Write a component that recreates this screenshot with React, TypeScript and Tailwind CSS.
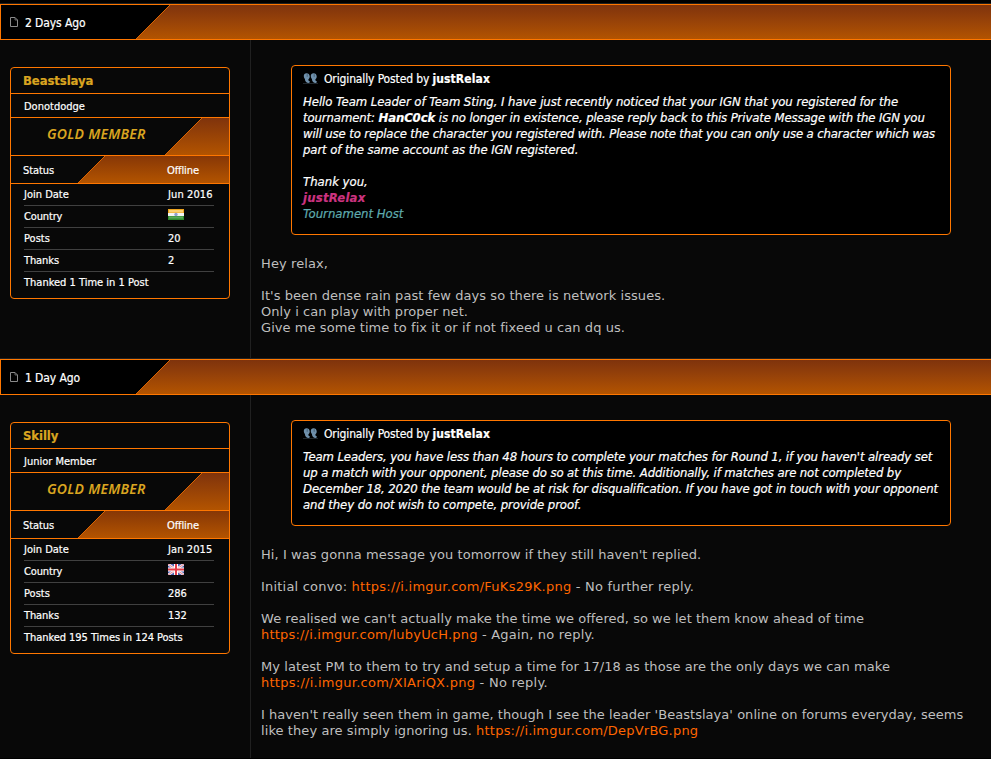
import type { ReactNode } from "react";

const TAHOMA = "font-['DejaVu_Sans_Condensed','DejaVu_Sans',sans-serif] [font-stretch:condensed] [-webkit-text-stroke:0.2px]";
const VERDANA = "font-['DejaVu_Sans',sans-serif]";

function PageIcon() {
  return (
    <svg width="8" height="10" viewBox="0 0 8 10" fill="none" stroke="#8a8a8a" className="shrink-0">
      <path d="M.5 .5H5L7.5 3V9.5H.5Z" />
      <path d="M5 .5V3H7.5" strokeWidth=".7" />
    </svg>
  );
}

function QuoteIcon() {
  return (
    <svg width="15" height="11" viewBox="0 0 15 11" className="mb-[2px] shrink-0">
      <path d="M0 10.500H15" stroke="#20272d" />
      <g fill="#6f90ab">
        <path d="M3.600 .3C1.700 .3 .8 1.600 .8 3.100C.8 4.700 1.600 5.700 1.900 6C2 8.400 3.700 10 5.600 10C6.500 10 7 9.300 6.900 8.300C5.800 8.200 5.300 7.300 5.400 6.200C6.300 5.600 6.800 4.500 6.700 3.200C6.500 1.500 5.400 .3 3.600 .3Z" />
        <path d="M10.600 .3C8.700 .3 7.800 1.600 7.800 3.100C7.800 4.700 8.600 5.700 8.900 6C9 8.400 10.700 10 12.600 10C13.500 10 14 9.300 13.900 8.300C12.800 8.200 12.300 7.300 12.400 6.200C13.300 5.600 13.800 4.500 13.700 3.200C13.500 1.500 12.400 .3 10.600 .3Z" />
      </g>
      <path d="M4.200 1.200V3.800M11.200 1.200V3.800" stroke="#3c556a" strokeWidth=".8" />
    </svg>
  );
}

function IndiaFlag() {
  return (
    <svg width="16" height="11" viewBox="0 0 16 11">
      <path fill="#f0a51e" d="M0 0H16V4H0Z" />
      <path fill="#fbd070" d="M1 1H15V3.500H1Z" />
      <path fill="#f4f4f4" d="M0 4H16V7H0Z" />
      <path fill="#2e8b2e" d="M0 7H16V11H0Z" />
      <path fill="#5aa85a" d="M1 7.500H15V9.500H1Z" />
      <circle cx="8" cy="5.500" r="1.700" fill="#8f9fd0" />
    </svg>
  );
}

function UkFlag() {
  return (
    <svg width="16" height="11" viewBox="0 0 16 11">
      <path fill="#4c5fae" d="M0 0H16V11H0Z" />
      <path stroke="#f3e9f0" strokeWidth="2.600" d="M0 0L16 11M16 0L0 11" />
      <path stroke="#e0707c" strokeWidth=".8" d="M0 0L16 11M16 0L0 11" />
      <path stroke="#fff" strokeWidth="4" d="M8 0V11M0 5.500H16" />
      <path stroke="#e23b47" strokeWidth="2" d="M8 0V11M0 5.500H16" />
    </svg>
  );
}

function Slant({ w, h, x, id, from }: { w: number; h: number; x: number; id: string; from: string }) {
  return (
    <svg width={w} height={h} viewBox={`0 0 ${w} ${h}`} className="absolute top-0 right-0">
      <defs>
        <linearGradient id={id} x1="0" y1="0" x2="0" y2="1">
          <stop offset="0" stopColor={from} />
          <stop offset="1" stopColor="#b35400" />
        </linearGradient>
      </defs>
      <path d={`M0 ${h}L${x} 0H${w}V${h}Z`} fill={`url(#${id})`} />
      <path d={`M0 ${h}L${x} 0`} stroke="#dc6400" />
    </svg>
  );
}

function Row({ label, labelClass = "", children, last }: { label: string; labelClass?: string; children?: ReactNode; last?: boolean }) {
  return (
    <div className={`mx-[13px] mr-[15px] flex h-[22px] pt-[3px] leading-[15px] ${last ? "" : "border-b border-[#404040]"}`}>
      <span className={`whitespace-nowrap ${last ? "" : "w-[144px]"} ${labelClass}`}>{label}</span>
      {children}
    </div>
  );
}

type PostData = {
  id: string;
  date: string;
  name: string;
  title: string;
  joined: string;
  flag: ReactNode;
  posts: string;
  thanks: string;
  thanked: string;
  thankedClass: string;
  quote: ReactNode;
  body: ReactNode;
  quoteHeight: string;
  height: string;
};

function Post({ p }: { p: PostData }) {
  return (
    <section className={`flex flex-col ${p.height}`}>
      <header className={`relative flex h-[36px] shrink-0 items-center border border-r-0 border-[#ff7700] bg-black pl-[9px] text-[12px] text-white ${TAHOMA}`}>
        <div className="absolute inset-y-0 right-0 left-[169px] bg-linear-to-b from-[#7f330c] to-[#b35400]" />
        <div className="absolute inset-y-0 left-[135px] w-[34px]">
          <Slant w={34} h={34} x={34} id={`${p.id}-head`} from="#7f330c" />
        </div>
        <PageIcon />
        <span className="ml-[7px] pt-[2px] tracking-[-0.1px] whitespace-nowrap">{p.date}</span>
      </header>
      <div className="flex min-h-0 flex-1">
        <aside className="w-[251px] shrink-0 border-r border-[#202020] pt-[27px] pl-[10px]">
          <div className={`h-[232px] w-[220px] rounded-[4px] border border-[#ff7700] text-[11px] text-white ${TAHOMA}`}>
            <div className="h-[26px] border-b border-[#ff7700] pl-[12px] text-[13px] leading-[25px] font-bold tracking-[-0.1px] text-[#daa520]">{p.name}</div>
            <div className="h-[24px] border-b border-[#ff7700] pl-[13px] leading-[25px]">{p.title}</div>
            <div className="relative h-[38px] border-b border-[#ff7700]">
              <Slant w={64} h={37} x={37} id={`${p.id}-rank`} from="#7f330c" />
              <div className="pl-[36px] font-['Noto_Sans',sans-serif] text-[14px] leading-[32px] font-semibold tracking-[0.25px] text-[#daa520] italic [-webkit-text-stroke:0px]">GOLD MEMBER</div>
            </div>
            <div className="relative h-[28px] border-b border-[#ff7700]">
              <Slant w={151} h={27} x={27} id={`${p.id}-status`} from="#873706" />
              <div className="relative flex pl-[12px] leading-[29px]">
                <span className="w-[144px] tracking-[-0.1px]">Status</span>
                <span className="tracking-[-0.1px]">Offline</span>
              </div>
            </div>
            <Row label="Join Date"><span className="tracking-[0.1px]">{p.joined}</span></Row>
            <Row label="Country" labelClass="tracking-[-0.15px]"><span>{p.flag}</span></Row>
            <Row label="Posts"><span>{p.posts}</span></Row>
            <Row label="Thanks" labelClass="tracking-[-0.1px]"><span>{p.thanks}</span></Row>
            <Row label={p.thanked} labelClass={p.thankedClass} last />
          </div>
        </aside>
        <main className="flex-1 pt-[25px] pl-[10px]">
          <div className={`ml-[30px] w-[660px] rounded-[4px] border border-[#ff7700] bg-black pt-[5px] pl-[11px] text-white ${TAHOMA} ${p.quoteHeight}`}>
            <div className="flex h-[16px] items-center text-[12px] leading-[16px] whitespace-pre">
              <QuoteIcon />
              <span className="ml-[6px] tracking-[-0.13px]">Originally Posted by </span>
              <b className="tracking-[0.1px]">justRelax</b>
            </div>
            <div className="mt-[7px] text-[13px] leading-[16px] whitespace-pre italic">{p.quote}</div>
          </div>
          <div className={`mt-[21px] text-[13px] leading-[16px] whitespace-pre text-[#bfbfbf] ${VERDANA}`}>{p.body}</div>
        </main>
      </div>
    </section>
  );
}

function L({ c = "", children }: { c?: string; children?: ReactNode }) {
  return <div className={`h-[16px] ${c}`}>{children}</div>;
}

function Url({ c, children }: { c: string; children: ReactNode }) {
  return <a className={`text-[#ff6600] ${c}`}>{children}</a>;
}

const posts: PostData[] = [
  {
    id: "first", date: "2 Days Ago", name: "Beastslaya", title: "Donotdodge",
    joined: "Jun 2016", flag: <IndiaFlag />, posts: "20", thanks: "2", thanked: "Thanked 1 Time in 1 Post", thankedClass: "",
    quoteHeight: "h-[170px]", height: "h-[354px]",
    quote: (
      <>
        <L c="tracking-[-0.058px]">Hello Team Leader of Team Sting, I have just recently noticed that your IGN that you registered for the</L>
        <L c="tracking-[-0.11px]">tournament: <b>HanC0ck</b> is no longer in existence, please reply back to this Private Message with the IGN you</L>
        <L c="tracking-[-0.138px]">will use to replace the character you registered with. Please note that you can only use a character which was</L>
        <L c="tracking-[-0.1px]">part of the same account as the IGN registered.</L>
        <L />
        <L>Thank you,</L>
        <L c="font-bold tracking-[0.2px] text-[#cc3380]">justRelax</L>
        <L c="text-[#5fabaf]">Tournament Host</L>
      </>
    ),
    body: (
      <>
        <L c="tracking-[0.1px]">Hey relax,</L>
        <L />
        <L c="tracking-[0.065px]">It's been dense rain past few days so there is network issues.</L>
        <L c="tracking-[0.065px]">Only i can play with proper net.</L>
        <L c="tracking-[0.07px]">Give me some time to fix it or if not fixeed u can dq us.</L>
      </>
    ),
  },
  {
    id: "second", date: "1 Day Ago", name: "Skilly", title: "Junior Member",
    joined: "Jan 2015", flag: <UkFlag />, posts: "286", thanks: "132", thanked: "Thanked 195 Times in 124 Posts", thankedClass: "tracking-[-0.05px]",
    quoteHeight: "h-[106px]", height: "h-[399px]",
    quote: (
      <>
        <L c="tracking-[-0.114px]">Team Leaders, you have less than 48 hours to complete your matches for Round 1, if you haven't already set</L>
        <L c="tracking-[-0.117px]">up a match with your opponent, please do so at this time. Additionally, if matches are not completed by</L>
        <L c="tracking-[-0.11px]">December 18, 2020 the team would be at risk for disqualification. If you have got in touch with your opponent</L>
        <L c="tracking-[-0.1px]">and they do not wish to compete, provide proof.</L>
      </>
    ),
    body: (
      <>
        <L c="tracking-[0.075px]">Hi, I was gonna message you tomorrow if they still haven't replied.</L>
        <L />
        <L c="tracking-[0.2px]">Initial convo: <Url c="tracking-[0.26px]">https://i.imgur.com/FuKs29K.png</Url> - No further reply.</L>
        <L />
        <L c="tracking-[0.034px]">We realised we can't actually make the time we offered, so we let them know ahead of time</L>
        <L c="tracking-[0.2px]"><Url c="tracking-[0.2px]">https://i.imgur.com/lubyUcH.png</Url> - Again, no reply.</L>
        <L />
        <L c="tracking-[0.075px]">My latest PM to them to try and setup a time for 17/18 as those are the only days we can make</L>
        <L c="tracking-[0.25px]"><Url c="tracking-[0.26px]">https://i.imgur.com/XIAriQX.png</Url> - No reply.</L>
        <L />
        <L c="tracking-[0.04px]">I haven't really seen them in game, though I see the leader 'Beastslaya' online on forums everyday, seems</L>
        <L c="tracking-[0.08px]">like they are simply ignoring us. <Url c="tracking-[0.21px]">https://i.imgur.com/DepVrBG.png</Url></L>
      </>
    ),
  },
];

export default function App() {
  return (
    <div className="h-[759px] w-[991px] overflow-hidden bg-[#080808]">
      <div className="h-[4px] border-b border-[#202020] bg-black" />
      <Post p={posts[0]} />
      <div className="h-px bg-[#202020]" />
      <Post p={posts[1]} />
      <div className="h-px bg-black" />
    </div>
  );
}
